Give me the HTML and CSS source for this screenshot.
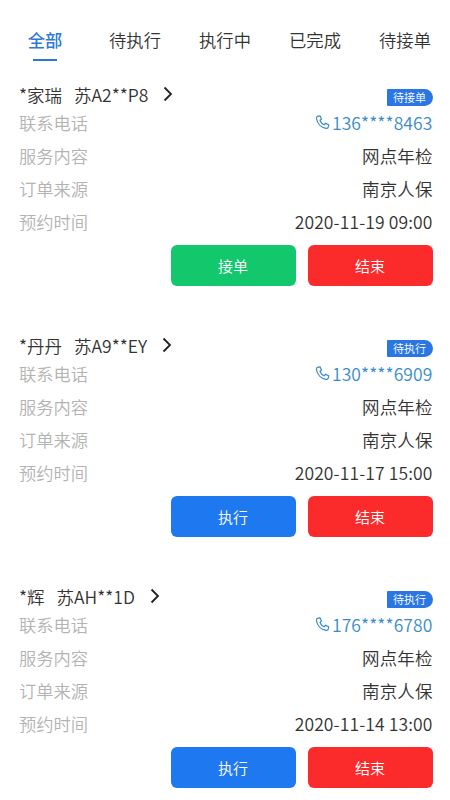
FILE: index.html
```html
<!DOCTYPE html>
<html lang="zh-CN">
<head>
<meta charset="utf-8">
<title>订单</title>
<link rel="stylesheet" href="styles.css">
</head>
<body>
<nav class="tabs">
  <div class="tab active">全部</div>
  <div class="tab">待执行</div>
  <div class="tab">执行中</div>
  <div class="tab">已完成</div>
  <div class="tab">待接单</div>
</nav>
<section class="card">
  <div class="head"><span class="name">*家瑞</span><span class="plate">苏A2**P8</span>
    <svg class="chev" viewBox="0 0 10 16"><path d="M1.500 1.500 8 8l-6.500 6.500"/></svg>
    <span class="badge">待接单</span></div>
  <div class="row"><span class="label">联系电话</span><span class="phone"><svg class="tel" viewBox="0 0 16 16"><path d="M3.200 1.300 5.400 1l1.500 3.300-1.500 1.500c.7 2 2.300 3.700 4.400 4.600l1.500-1.500 3.300 1.500-.4 2.300c-.2 1-1.200 1.700-2.300 1.500C6.500 13.400 2.300 9.200 1.500 3.600c-.1-1.100.6-2.100 1.700-2.300z"/></svg>136****8463</span></div>
  <div class="row"><span class="label">服务内容</span><span class="value">网点年检</span></div>
  <div class="row"><span class="label">订单来源</span><span class="value">南京人保</span></div>
  <div class="row"><span class="label">预约时间</span><span class="value">2020-11-19 09:00</span></div>
  <div class="actions"><button class="btn green">接单</button><button class="btn red">结束</button></div>
</section>
<section class="card">
  <div class="head"><span class="name">*丹丹</span><span class="plate">苏A9**EY</span>
    <svg class="chev" viewBox="0 0 10 16"><path d="M1.500 1.500 8 8l-6.500 6.500"/></svg>
    <span class="badge">待执行</span></div>
  <div class="row"><span class="label">联系电话</span><span class="phone"><svg class="tel" viewBox="0 0 16 16"><path d="M3.200 1.300 5.400 1l1.500 3.300-1.500 1.500c.7 2 2.300 3.700 4.400 4.600l1.500-1.500 3.300 1.500-.4 2.300c-.2 1-1.200 1.700-2.300 1.500C6.500 13.400 2.300 9.200 1.500 3.600c-.1-1.100.6-2.100 1.700-2.300z"/></svg>130****6909</span></div>
  <div class="row"><span class="label">服务内容</span><span class="value">网点年检</span></div>
  <div class="row"><span class="label">订单来源</span><span class="value">南京人保</span></div>
  <div class="row"><span class="label">预约时间</span><span class="value">2020-11-17 15:00</span></div>
  <div class="actions"><button class="btn blue">执行</button><button class="btn red">结束</button></div>
</section>
<section class="card">
  <div class="head"><span class="name">*辉</span><span class="plate">苏AH**1D</span>
    <svg class="chev" viewBox="0 0 10 16"><path d="M1.500 1.500 8 8l-6.500 6.500"/></svg>
    <span class="badge">待执行</span></div>
  <div class="row"><span class="label">联系电话</span><span class="phone"><svg class="tel" viewBox="0 0 16 16"><path d="M3.200 1.300 5.400 1l1.500 3.300-1.500 1.500c.7 2 2.300 3.700 4.400 4.600l1.500-1.500 3.300 1.500-.4 2.300c-.2 1-1.200 1.700-2.300 1.500C6.500 13.400 2.300 9.200 1.500 3.600c-.1-1.100.6-2.100 1.700-2.300z"/></svg>176****6780</span></div>
  <div class="row"><span class="label">服务内容</span><span class="value">网点年检</span></div>
  <div class="row"><span class="label">订单来源</span><span class="value">南京人保</span></div>
  <div class="row"><span class="label">预约时间</span><span class="value">2020-11-14 13:00</span></div>
  <div class="actions"><button class="btn blue">执行</button><button class="btn red">结束</button></div>
</section>
</body>
</html>
```
FILE: styles.css
```css
* { box-sizing: border-box; }
html, body { margin: 0; padding: 0; }
body {
  width: 450px;
  height: 800px;
  overflow: hidden;
  background: #fff;
  color: #333;
  font-family: "Noto Sans CJK SC", "Noto Sans", sans-serif;
  font-size: 17.500px;
  font-weight: 350;
}
.tabs {
  display: grid;
  grid-template-columns: repeat(5, 90px);
  height: 82px;
  padding-top: 28px;
}
.tab {
  position: relative;
  height: 24px;
  line-height: 24px;
  font-size: 17.300px;
  text-align: center;
  white-space: nowrap;
}
.tab.active { color: #2a7ad6; font-weight: 500; }
.tab.active::after {
  content: "";
  position: absolute;
  left: 33px;
  width: 24px;
  top: 31px;
  height: 2px;
  background: #2a7ad6;
}
.card {
  height: 251px;
  padding: 0 17.500px 0 19px;
}
.head {
  display: flex;
  align-items: center;
  height: 24px;
}
.name { margin-right: 12px; }
.chev {
  width: 10px;
  height: 16px;
  margin-left: 15px;
  fill: none;
  stroke: #222;
  stroke-width: 1.800;
}
.badge {
  margin-left: auto;
  margin-top: 6px;
  width: 46px;
  height: 17px;
  line-height: 17px;
  text-align: center;
  font-size: 11px;
  color: #fff;
  background: #2a76e3;
  border-radius: 1px 9px 9px 1px;
}
.row {
  display: flex;
  justify-content: space-between;
  align-items: center;
  height: 33px;
}
.label { color: #b3b3b3; font-size: 17.300px; }
.value { color: #333; letter-spacing: .12px; }
.phone { display: flex; align-items: center; color: #3a8cc8; letter-spacing: .1px; }
.tel {
  width: 15px;
  height: 15px;
  margin-right: 2px;
  fill: none;
  stroke: #3a8cc8;
  stroke-width: 1.300;
}
.actions {
  display: flex;
  justify-content: flex-end;
  gap: 12px;
  margin-top: 7px;
}
.btn {
  width: 125px;
  height: 41px;
  border: 0;
  border-radius: 6px;
  padding: 0;
  color: #fff;
  font: inherit;
  font-size: 15px;
}
.green { background: #12c76c; }
.red { background: #fb2b2b; }
.blue { background: #1e78f0; }
```
